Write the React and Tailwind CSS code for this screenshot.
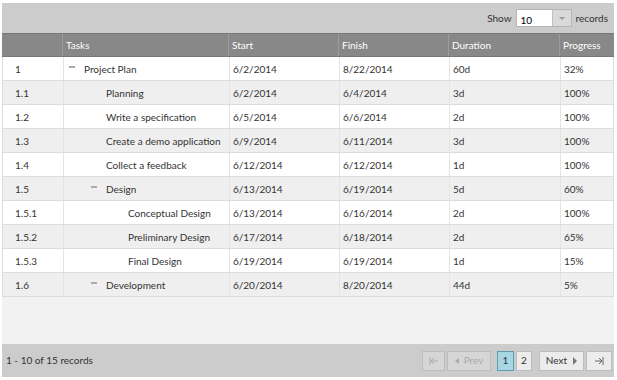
import React from 'react';

const rows = [
  { id: '1', task: 'Project Plan', level: 0, toggle: true, start: '6/2/2014', finish: '8/22/2014', dur: '60d', prog: '32%' },
  { id: '1.1', task: 'Planning', level: 1, start: '6/2/2014', finish: '6/4/2014', dur: '3d', prog: '100%' },
  { id: '1.2', task: 'Write a specification', level: 1, start: '6/5/2014', finish: '6/6/2014', dur: '2d', prog: '100%' },
  { id: '1.3', task: 'Create a demo application', level: 1, start: '6/9/2014', finish: '6/11/2014', dur: '3d', prog: '100%' },
  { id: '1.4', task: 'Collect a feedback', level: 1, start: '6/12/2014', finish: '6/12/2014', dur: '1d', prog: '100%' },
  { id: '1.5', task: 'Design', level: 1, toggle: true, start: '6/13/2014', finish: '6/19/2014', dur: '5d', prog: '60%' },
  { id: '1.5.1', task: 'Conceptual Design', level: 2, start: '6/13/2014', finish: '6/16/2014', dur: '2d', prog: '100%' },
  { id: '1.5.2', task: 'Preliminary Design', level: 2, start: '6/17/2014', finish: '6/18/2014', dur: '2d', prog: '65%' },
  { id: '1.5.3', task: 'Final Design', level: 2, start: '6/19/2014', finish: '6/19/2014', dur: '1d', prog: '15%' },
  { id: '1.6', task: 'Development', level: 1, toggle: true, start: '6/20/2014', finish: '8/20/2014', dur: '44d', prog: '5%' },
];

const cols = 'grid grid-cols-[60px_166px_110px_110px_111px_55px]';
const indent = ['pl-[20px]', 'pl-[42px]', 'pl-[64px]'];

function Task({ r }) {
  return (
    <div className={`${indent[r.level]} relative flex items-center h-full pt-px border-l border-[#e4e4e4] whitespace-nowrap`}>
      {r.toggle && (
        <span className="absolute top-[9px] w-[6px] h-[2px] bg-[#aaa]" style={{ left: 5 + r.level * 22 }} />
      )}
      {r.task}
    </div>
  );
}

export default function App() {
  return (
    <div className="w-[617px] h-[380px] bg-white pt-[3px] pl-[2px]" style={{ fontFamily: 'Lato, "Open Sans", sans-serif' }}>
      <div className="w-[612px] flex flex-col text-[10px] text-[#333]">
        {/* Toolbar */}
        <div className="h-[30px] bg-[#cccccc] flex items-center justify-end pr-[6px] gap-[4px] text-[#333]">
          <span>Show</span>
          <div className="flex h-[18px] w-[56px] border border-[#b5b5b5] bg-white">
            <span className="flex-1 pl-[4px] pt-[3px] text-black">10</span>
            <span className="w-[19px] bg-[#d9d9d9] border-l border-[#c0c0c0] flex items-center justify-center">
              <span className="w-0 h-0 border-l-[3px] border-r-[3px] border-t-[3px] border-l-transparent border-r-transparent border-t-[#999]" />
            </span>
          </div>
          <span>records</span>
        </div>

        {/* Header */}
        <div className={`${cols} h-[24px] bg-[#888888] border-t border-b border-[#777] text-white`}>
          {['', 'Tasks', 'Start', 'Finish', 'Duration', 'Progress'].map((h, i) => (
            <div key={i} className={`flex items-center pl-[3px] pt-px ${i > 0 ? 'border-l border-[#9c9c9c]' : ''}`}>
              {h}
            </div>
          ))}
        </div>

        {/* Body */}
        {rows.map((r, i) => (
          <div key={r.id} className={`${cols} h-[24px] border-b border-[#dcdcdc] border-x ${i % 2 ? 'bg-[#efefef]' : 'bg-white'}`}>
            <div className="flex items-center pl-[12px] pt-px">{r.id}</div>
            <Task r={r} />
            <div className="flex items-center pl-[3px] pt-px border-l border-[#e4e4e4]">{r.start}</div>
            <div className="flex items-center pl-[3px] pt-px border-l border-[#e4e4e4]">{r.finish}</div>
            <div className="flex items-center pl-[3px] pt-px border-l border-[#e4e4e4]">{r.dur}</div>
            <div className="flex items-center pl-[3px] pt-px border-l border-[#e4e4e4]">{r.prog}</div>
          </div>
        ))}

        <div className="h-[47px] bg-[#f2f2f2]" />

        {/* Footer */}
        <div className="h-[33px] bg-[#cccccc] flex items-center justify-between pl-[4px] pr-[2px]">
          <span>1 - 10 of 15 records</span>
          <div className="flex items-center text-[#333]">
            <button className="w-[23px] h-[20px] border border-[#bdbdbd] bg-[#d6d6d6] text-[#aaa] flex items-center justify-center">
              <svg width="10" height="8" viewBox="0 0 10 8"><path d="M1 0v8M9 4H2M5 1L2 4l3 3" stroke="#aaa" fill="none" strokeWidth="1" /></svg>
            </button>
            <button className="ml-[2px] w-[44px] h-[20px] border border-[#bdbdbd] bg-[#d6d6d6] text-[#aaa] flex items-center justify-center gap-[5px]">
              <span className="w-0 h-0 border-t-[3.5px] border-b-[3.5px] border-r-[4px] border-t-transparent border-b-transparent border-r-[#aaa]" />
              Prev
            </button>
            <button className="ml-[6px] w-[17px] h-[20px] border border-[#5f9db0] bg-[#a9d6e3] flex items-center justify-center">1</button>
            <button className="ml-[2px] w-[16px] h-[20px] border border-[#bdbdbd] bg-[#ececec] flex items-center justify-center">2</button>
            <button className="ml-[7px] w-[45px] h-[20px] border border-[#bdbdbd] bg-[#ececec] flex items-center justify-center gap-[6px]">
              Next
              <span className="w-0 h-0 border-t-[4px] border-b-[4px] border-l-[4px] border-t-transparent border-b-transparent border-l-[#777]" />
            </button>
            <button className="ml-[2px] w-[26px] h-[20px] border border-[#bdbdbd] bg-[#ececec] flex items-center justify-center">
              <svg width="10" height="8" viewBox="0 0 10 8"><path d="M9 0v8M1 4h7M5 1l3 3-3 3" stroke="#666" fill="none" strokeWidth="1" /></svg>
            </button>
          </div>
        </div>
      </div>
    </div>
  );
}
